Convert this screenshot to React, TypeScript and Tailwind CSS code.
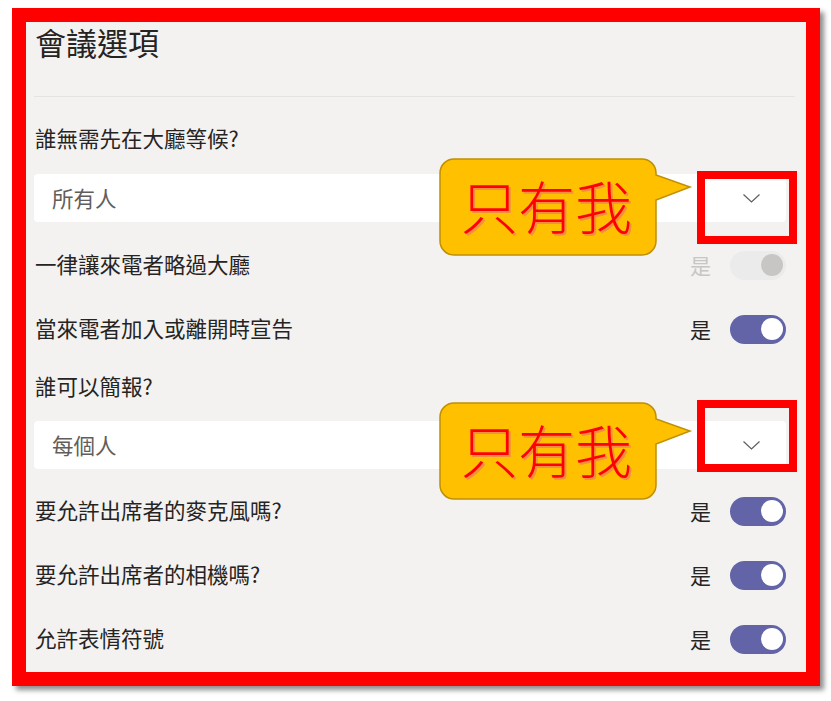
import React from "react";

const font = { fontFamily: '"Noto Sans CJK TC", "Noto Sans", sans-serif' };

function Toggle({ disabled }: { disabled?: boolean }) {
  return (
    <div className="flex items-center gap-[19px]">
      <span className={"text-[21px] leading-[28px] " + (disabled ? "text-[#c8c6c4]" : "text-[#252423]")}>是</span>
      <div
        className={
          "w-[56px] h-[29px] rounded-full flex items-center justify-end pr-[3px] " +
          (disabled ? "bg-[#ebebeb]" : "bg-[#6264a7]")
        }
      >
        <div className={"w-[22px] h-[22px] rounded-full " + (disabled ? "bg-[#c8c6c4]" : "bg-white")} />
      </div>
    </div>
  );
}

function Row({ label, disabled }: { label: string; disabled?: boolean }) {
  return (
    <div className="flex items-center justify-between h-[64px]">
      <span className="text-[21.5px] leading-[28px] text-[#252423] pl-[1px] -mt-[2px]">{label}</span>
      <Toggle disabled={disabled} />
    </div>
  );
}

function Dropdown({ value }: { value: string }) {
  return (
    <div className="h-[48px] bg-white rounded-[4px] flex items-center justify-between pl-[18px] pr-[26px]">
      <span className="text-[21.5px] leading-[28px] text-[#605e5c] -mt-[1px]">{value}</span>
      <svg width="17" height="9" viewBox="0 0 17 9">
        <polyline points="0.5,0.5 8.5,8 16.5,0.5" fill="none" stroke="#605e5c" strokeWidth="1.2" />
      </svg>
    </div>
  );
}

function Callout({ top }: { top: number }) {
  return (
    <div className="absolute left-[438px] w-[256px] h-[100px]" style={{ top }}>
      <svg width="256" height="100" viewBox="0 0 256 100" className="absolute left-0 top-0">
        <path
          d="M16,2 H204 A14,14 0 0 1 218,16 V18 L252,30 L218,43 V84 A14,14 0 0 1 204,98 H16 A14,14 0 0 1 2,84 V16 A14,14 0 0 1 16,2 Z"
          fill="#ffc000"
          stroke="#bf9000"
          strokeWidth="1.5"
        />
      </svg>
      <div
        className="absolute left-[23px] top-[15px] text-[57px] leading-[64px] font-light text-[#ff0000] whitespace-nowrap"
        style={{ textShadow: "2px 2px 0 rgba(240,130,80,0.8)" }}
      >
        只有我
      </div>
    </div>
  );
}

export default function App() {
  return (
    <div className="relative w-[831px] h-[701px] bg-white overflow-hidden" style={font}>
      <div className="absolute left-[12px] top-[8px] w-[808px] h-[678px] border-[14px] border-[#ff0000] bg-[#f3f2f1] shadow-[4px_4px_5px_rgba(0,0,0,0.45)]">
        <div className="pl-[8px] pr-[20px] pt-[2px] flex flex-col">
          <div className="h-[36px] text-[31px] leading-[36px] text-[#252423] pl-[1px]">會議選項</div>
          <div className="mt-[36px] h-[1px] bg-[#e6e4e2] mr-[-9px]" />
          <div className="mt-[27px] text-[21.5px] leading-[28px] text-[#252423] pl-[1px]">誰無需先在大廳等候?</div>
          <div className="mt-[22px]">
            <Dropdown value="所有人" />
          </div>
          <div className="mt-[11px]">
            <Row label="一律讓來電者略過大廳" disabled />
            <Row label="當來電者加入或離開時宣告" />
          </div>
          <div className="mt-[11px] text-[21.5px] leading-[28px] text-[#252423] pl-[1px]">誰可以簡報?</div>
          <div className="mt-[21px]">
            <Dropdown value="每個人" />
          </div>
          <div className="mt-[10px]">
            <Row label="要允許出席者的麥克風嗎?" />
            <Row label="要允許出席者的相機嗎?" />
            <Row label="允許表情符號" />
          </div>
        </div>
      </div>

      <div className="absolute left-[697px] top-[171px] w-[100px] h-[73px] border-[8px] border-[#ff0000]" />
      <div className="absolute left-[697px] top-[400px] w-[100px] h-[72px] border-[8px] border-[#ff0000]" />

      <Callout top={157} />
      <Callout top={401} />
    </div>
  );
}
